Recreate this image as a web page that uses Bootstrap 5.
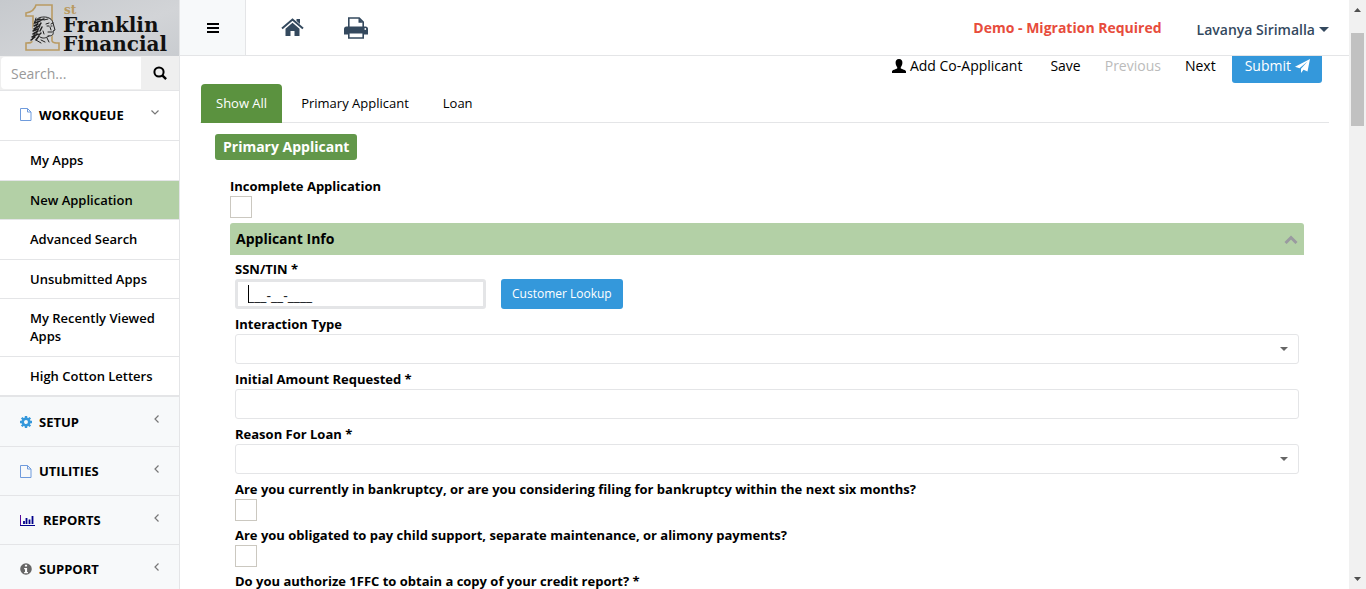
<!DOCTYPE html>
<html lang="en">
<head>
<meta charset="utf-8">
<meta name="viewport" content="width=device-width, initial-scale=1">
<title>New Application</title>
<link rel="stylesheet" href="https://cdn.jsdelivr.net/npm/bootstrap@5.3.0/dist/css/bootstrap.min.css">
<style>
  :root { --line: #e4e5e7; --leaf: #5b923f; --sage: #b3d0a6; --sky: #3498db; --navy: #34495e; }
  body { font-family: "Open Sans", sans-serif; font-size: 13px; line-height: 20px; color: #000; background: #fff; }
  a { color: #000; text-decoration: none; }
  svg { display: block; flex: none; }

  .side { width: 180px; background: #f7f9fa; border-right: 1px solid var(--line); }
  .brand { height: 56px; width: 180px; background: linear-gradient(160deg, #c6c9cd, #d2d4d7 60%, #c9ccd0); }
  .search-row { height: 35px; background: #efefef; border-bottom: 1px solid var(--line); padding: 1px 0 1px 1px; }
  .search-row .form-control { border: 0; border-radius: 4px 0 0 4px; padding: 0 10px; font-size: 14px; }
  .search-row .form-control::placeholder { color: #999; }
  .search-row .btn { width: 38px; border: 0; border-radius: 0; padding: 0; }
  .group-link { height: 49px; padding: 0 20px; border-bottom: 1px solid var(--line); font-weight: 700; }
  .group-link .sym { margin-right: 7px; }
  .group-link .sym-wide { margin-right: 8px; }
  .group-link .chev { margin: -5px 0 0 auto; }
  .group-open { height: 50px; padding-bottom: 2px; background: #fff; }
  .sub-list { min-height: 256px; background: #fff; border-bottom: 1px solid var(--line); }
  .sub-list li { border-bottom: 1px solid var(--line); flex: 1 1 auto; }
  .sub-list a { display: block; height: 100%; padding: 10px 20px 10px 30px; line-height: 18px; font-weight: 600; }
  .sub-list .active { background: var(--sage); }
  .sub-list + .group-link { height: 50px; }

  .topbar { height: 56px; border-bottom: 1px solid var(--line); color: var(--navy); font-size: 14px; }
  .topbar a { color: var(--navy); }
  .burger { width: 66px; border: 0; border-right: 1px solid var(--line); background: #f7f9fa; }
  .quick { gap: 40px; padding-left: 35px; }
  .notice { color: #e74c3c; font-weight: 700; }
  .account { font-weight: 600; margin-left: 35px; }

  .page-body { padding: 0 20px; }
  .action-bar { margin-top: -7px; margin-right: 7px; }
  .action-bar .btn { border: 0; padding: 6px 12px; font-size: 14px; line-height: 22px; height: 34px; color: #000; }
  .action-bar .btn:disabled { color: #bbb; opacity: 1; }
  .action-bar .btn-send { background: var(--sky); color: #fff; border-radius: 3px; margin-left: 4px; padding: 6px 12px 6px 13px; }
  .nav-tabs { border-bottom: 1px solid var(--line); margin-top: 1px; }
  .nav-tabs .nav-link { color: #000; border: 0; padding: 9px 15px; margin: 0 3px 0 1px; border-radius: 4px 4px 0 0; }
  .nav-tabs .nav-link.active { background: var(--leaf); color: #fff; margin-bottom: -1px; padding-bottom: 10px; }
  .tag-row { margin: 11px 0 16px 15px; }
  .section-tag { background: #62974a; color: #fff; font-size: 14px; line-height: 26px; font-weight: 700; border-radius: 3px; padding: 0 8px; }
  .section-body { padding: 0 25px 0 30px; }
  .field-label { display: block; font-weight: 700; line-height: 20px; }
  .panel-head { height: 32px; background: var(--sage); border-radius: 3px 3px 0 0; padding: 0 6px; font-size: 14px; font-weight: 700; margin: 5px 0 4px; }
  .panel-head button { border: 0; background: none; padding: 0; }
  .panel-fields { padding: 0 5px; }
  .entry { margin-bottom: 5px; }
  .entry-tick { margin-bottom: 4px; }
  .entry .form-control, .entry .form-select { height: 30px; border: 1px solid var(--line); border-radius: 3px; padding: 0 12px; font-size: 13px; }
  .entry .form-select { background: #fff url("data:image/svg+xml,%3Csvg xmlns='http://www.w3.org/2000/svg' width='8' height='4'%3E%3Cpath d='M0 0h8L4 4z' fill='%23666'/%3E%3C/svg%3E") no-repeat right 10px center; background-size: 8px 4px; }
  .ssn { width: 251px; }
  .entry .ssn .form-control { border-width: 3px; padding: 2px 10px 0; font-size: 14px; }
  .text-caret { position: absolute; left: 13px; top: 6px; width: 1px; height: 18px; background: #000; }
  .btn-lookup { background: var(--sky); color: #fff; border: 0; border-radius: 3px; font-size: 12px; height: 30px; padding: 0 11px; margin-left: 15px; }
  .tick { appearance: none; display: block; width: 22px; height: 22px; margin: 0; border: 1px solid #cbc8c0; background: #fff; }
  .rail { width: 17px; background: #f1f1f1; padding: 8px 2px; }
  .thumb { height: 93px; margin-top: 21px; background: #c1c1c1; width: 13px; }
</style>
</head>
<body>
<div class="d-flex vh-100 overflow-hidden">
  <aside class="side flex-shrink-0 overflow-hidden">
    <a class="brand d-block" href="#" aria-label="1st Franklin Financial">
      <svg width="180" height="56" viewBox="0 0 180 56">
        <path d="M33 40V16h-7v-3c6-1 9-4 10-8h16v36c1 2 3 2 7 2v7H26v-7c4 0 6 0 7-3z" fill="#d0d2d5" stroke="#b99b63" stroke-width="1.6"/>
        <path d="M35 22c2-4 5-5 9-5 6 0 9 3 9 7l2 6-2 1c1 4-1 6-5 6l1 5-8 2-10-3 1-7-1-2c2-3 2-6 4-10z" fill="#cfd0d1"/>
        <g fill="none" stroke="#222" stroke-linecap="round">
          <path d="M35 22c2-4 5-5 9-5 5 0 8 2 9 6l2 7-2 1c1 4-1 5-5 5" stroke-width="1"/>
          <path d="M37 20l3-1M35 23l5-2M34 26l4-2M34 29l5-3M33 31l5-2M33 34l5-3M32 37l6-3M31 40l4-3M36 40l3-4M41 20l3-1M41 23l-2 3M42 27l-2 4M41 33l-2 2" stroke-width="1.5"/>
          <path d="M36 18l-2 6M38 22l-3 8M40 26l-4 8M35 33l-3 7M46 24l3-1M51 24l2-1M47 26l2 0M51 26l1 0M50 27l1 3M48 32l4 0M43 31l1 3M40 37c3 2 6 1 9-1M36 40l5 3M41 40l4 2M47 38l2 4M44 20l4-1" stroke-width="1"/>
        </g>
        <g font-family="DejaVu Serif, serif" font-weight="700">
          <text x="64" y="14" font-size="12" fill="#b99b63">st</text>
          <text x="63" y="32" font-size="20" fill="#111">Franklin</text>
          <text x="63" y="51" font-size="20" fill="#111">Financial</text>
        </g>
      </svg>
    </a>
    <form class="search-row d-flex">
      <input class="form-control" type="text" placeholder="Search..." aria-label="Search">
      <button class="btn d-flex align-items-center justify-content-center flex-shrink-0" type="button" aria-label="Search">
        <svg width="14" height="14" viewBox="0 0 14 14" fill="none" stroke="#000" stroke-width="2"><circle cx="6" cy="6" r="4.6"/><path d="M9.3 9.3l3.8 3.8" stroke-width="2.4"/></svg>
      </button>
    </form>
    <nav>
      <a class="group-link group-open d-flex align-items-center" href="#">
        <svg class="sym" width="12" height="13" viewBox="0 0 12 13" fill="none" stroke="#6f9bdc"><path d="M.5.5h7l3.500 3.500v8.500H.5zM7.500.5V4H11"/></svg>WORKQUEUE
        <svg class="chev" width="8" height="5" viewBox="0 0 8 5" fill="none" stroke="#777" stroke-width="1.2"><path d="M.5.5L4 4 7.500.5"/></svg>
      </a>
      <ul class="sub-list list-unstyled d-flex flex-column mb-0">
        <li><a href="#">My Apps</a></li>
        <li><a class="active" href="#">New Application</a></li>
        <li><a href="#">Advanced Search</a></li>
        <li><a href="#">Unsubmitted Apps</a></li>
        <li><a href="#">My Recently Viewed Apps</a></li>
        <li><a href="#">High Cotton Letters</a></li>
      </ul>
      <a class="group-link d-flex align-items-center" href="#">
        <svg class="sym" width="12" height="12" viewBox="0 0 11 11" fill="none" stroke="#3498db"><circle cx="5.5" cy="5.5" r="3" stroke-width="2.4"/><path d="M5.500 0v2M5.500 9v2M0 5.500h2M9 5.500h2M1.600 1.600l1.400 1.400M8 8l1.400 1.400M1.600 9.400L3 8M8 3l1.400-1.400" stroke-width="2.2"/></svg>SETUP
        <svg class="chev" width="5" height="8" viewBox="0 0 5 8" fill="none" stroke="#777" stroke-width="1.2"><path d="M4.500.5L1 4l3.500 3.500"/></svg>
      </a>
      <a class="group-link d-flex align-items-center" href="#">
        <svg class="sym" width="12" height="13" viewBox="0 0 12 13" fill="none" stroke="#6f9bdc"><path d="M.5.5h7l3.500 3.500v8.500H.5zM7.500.5V4H11"/></svg>UTILITIES
        <svg class="chev" width="5" height="8" viewBox="0 0 5 8" fill="none" stroke="#777" stroke-width="1.2"><path d="M4.500.5L1 4l3.500 3.500"/></svg>
      </a>
      <a class="group-link d-flex align-items-center" href="#">
        <svg class="sym sym-wide" width="15" height="11" viewBox="0 0 15 11" fill="none" stroke="#00008b"><path d="M.5 0v10.500H15" stroke="#5a0a9a"/><path d="M0 10.500h15"/><path d="M4 9V6M6.500 9V3M9.500 9V4.500M12.500 9V1" stroke-width="1.8"/></svg>REPORTS
        <svg class="chev" width="5" height="8" viewBox="0 0 5 8" fill="none" stroke="#777" stroke-width="1.2"><path d="M4.500.5L1 4l3.500 3.500"/></svg>
      </a>
      <a class="group-link d-flex align-items-center" href="#">
        <svg class="sym" width="12" height="12" viewBox="0 0 11 11"><circle cx="5.5" cy="5.5" r="5.3" fill="#666"/><path d="M4.500 1.500h2v1.800h-2zM3.800 4.500h2.700v3.700h.8v1.300H3.800V8.200h.8V5.800h-.8z" fill="#fff"/></svg>SUPPORT
        <svg class="chev" width="5" height="8" viewBox="0 0 5 8" fill="none" stroke="#777" stroke-width="1.2"><path d="M4.500.5L1 4l3.500 3.500"/></svg>
      </a>
    </nav>
  </aside>

  <div class="d-flex flex-column flex-grow-1 overflow-hidden">
    <header class="topbar d-flex flex-shrink-0">
      <button class="burger d-flex align-items-center justify-content-center" type="button" aria-label="Toggle menu">
        <svg width="12" height="10" viewBox="0 0 12 10" fill="#000"><path d="M0 0h12v2H0zM0 4h12v2H0zM0 8h12v2H0z"/></svg>
      </button>
      <div class="quick d-flex align-items-center">
        <a href="#" aria-label="Home"><svg width="23" height="19" viewBox="0 0 23 19" fill="#34495e"><path d="M11.500 4.800l7 6V18h-5v-5h-4v5h-5v-7.200z"/><path d="M15.500 1H19v5l-3.500-3z"/><path d="M1 10.500l10.500-9L22 10.500" fill="none" stroke="#34495e" stroke-width="2"/></svg></a>
        <a href="#" aria-label="Print"><svg width="24" height="22" viewBox="0 0 24 22"><path d="M4.800 11V1h10.400l4 4v6" fill="#fff" stroke="#34495e" stroke-width="1.6"/><path d="M14.500 1v4.800h4.700z" fill="#34495e"/><path d="M2.500 9.500h19Q24 9.500 24 12v5.500H0V12q0-2.500 2.500-2.500z" fill="#34495e"/><path d="M4.800 15.600h14.400v5.400H4.800z" fill="#fff" stroke="#34495e" stroke-width="1.6"/><circle cx="21.3" cy="12" r=".9" fill="#fff"/></svg></a>
      </div>
      <div class="d-flex align-items-center ms-auto pe-3">
        <span class="notice">Demo - Migration Required</span>
        <a class="account d-flex align-items-center pt-1 me-1" href="#">Lavanya Sirimalla
          <svg class="ms-1" width="10" height="5" viewBox="0 0 10 5" fill="#34495e"><path d="M0 0h10L5 5z"/></svg></a>
      </div>
    </header>
    <main class="page-body flex-grow-1 overflow-hidden">
      <div class="action-bar d-flex justify-content-end">
        <button class="btn d-flex align-items-center gap-1" type="button"><svg width="14" height="14" viewBox="0 0 14 14"><path d="M7 0c2.500 0 3.600 1.700 3.400 4C10.200 6 9.500 7.500 8.800 8v1.500c1.500.8 5.200 1.400 5.200 3V14H0v-1.500c0-1.600 3.700-2.200 5.200-3V8C4.500 7.500 3.800 6 3.600 4 3.400 1.700 4.500 0 7 0z"/></svg>Add Co-Applicant</button>
        <button class="btn ms-1" type="button">Save</button>
        <button class="btn" type="button" disabled>Previous</button>
        <button class="btn" type="button">Next</button>
        <button class="btn btn-send d-flex align-items-center gap-1" type="button">Submit <svg width="15" height="14" viewBox="0 0 15 14" fill="#fff"><path d="M15 0l-2.500 12.500-4-1.700L6 14V9.800L12.500 2.500 4.500 9.200 0 7.700z"/></svg></button>
      </div>
      <ul class="nav nav-tabs">
        <li class="nav-item"><a class="nav-link active" href="#">Show All</a></li>
        <li class="nav-item"><a class="nav-link" href="#">Primary Applicant</a></li>
        <li class="nav-item"><a class="nav-link" href="#">Loan</a></li>
      </ul>
      <div class="tag-row d-flex"><span class="section-tag">Primary Applicant</span></div>
      <form class="section-body">
        <label class="field-label" for="incomplete">Incomplete Application</label>
        <input class="tick" type="checkbox" id="incomplete">
        <div class="panel-head d-flex align-items-center justify-content-between">Applicant Info
          <button type="button" aria-label="Collapse"><svg width="14" height="9" viewBox="0 0 14 9" fill="none" stroke="#9a9aa0" stroke-width="3"><path d="M1.500 8L7 2.500 12.500 8"/></svg></button>
        </div>
        <div class="panel-fields">
          <div class="entry">
            <label class="field-label" for="ssn">SSN/TIN *</label>
            <div class="d-flex">
              <div class="ssn position-relative"><input class="form-control" id="ssn" type="text" value="___-__-____"><span class="text-caret"></span></div>
              <button class="btn btn-lookup" type="button">Customer Lookup</button>
            </div>
          </div>
          <div class="entry">
            <label class="field-label" for="interaction">Interaction Type</label>
            <select class="form-select" id="interaction"><option></option></select>
          </div>
          <div class="entry">
            <label class="field-label" for="amount">Initial Amount Requested *</label>
            <input class="form-control" id="amount" type="text">
          </div>
          <div class="entry">
            <label class="field-label" for="reason">Reason For Loan *</label>
            <select class="form-select" id="reason"><option></option></select>
          </div>
          <div class="entry entry-tick">
            <label class="field-label" for="bankrupt">Are you currently in bankruptcy, or are you considering filing for bankruptcy within the next six months?</label>
            <input class="tick" type="checkbox" id="bankrupt">
          </div>
          <div class="entry entry-tick">
            <label class="field-label" for="support">Are you obligated to pay child support, separate maintenance, or alimony payments?</label>
            <input class="tick" type="checkbox" id="support">
          </div>
          <div class="entry entry-tick">
            <label class="field-label" for="credit">Do you authorize 1FFC to obtain a copy of your credit report? *</label>
            <input class="tick" type="checkbox" id="credit">
          </div>
        </div>
      </form>
    </main>
  </div>
  <div class="rail d-flex flex-column align-items-center flex-shrink-0" aria-hidden="true">
    <svg width="7" height="4" viewBox="0 0 7 4" fill="#505050"><path d="M0 4h7L3.500 0z"/></svg>
    <div class="thumb"></div>
    <svg class="mt-auto" width="7" height="4" viewBox="0 0 7 4" fill="#505050"><path d="M0 0h7L3.500 4z"/></svg>
  </div>
</div>
<script src="https://cdn.jsdelivr.net/npm/bootstrap@5.3.0/dist/js/bootstrap.bundle.min.js"></script>
</body>
</html>
